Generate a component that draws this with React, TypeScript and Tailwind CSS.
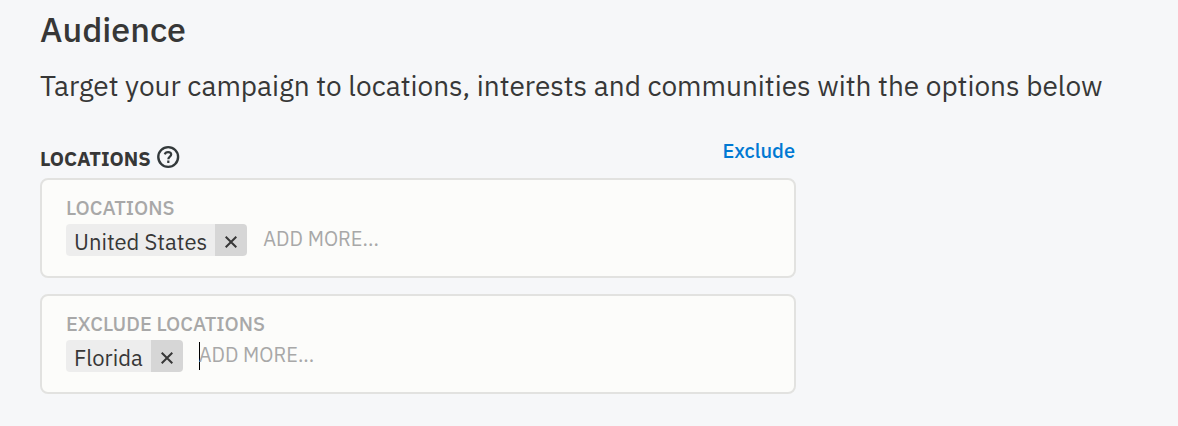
import { useState } from 'react';

type FieldProps = {
  label: string;
  initial: string[];
  focused?: boolean;
};

function LocationField({ label, initial, focused }: FieldProps) {
  const [items, setItems] = useState(initial);

  return (
    <div className="h-[100px] border-2 border-[#e2e2e0] rounded-lg bg-[#fcfcfa] px-6 pt-3.5">
      <div className="h-[30px] text-[20px] leading-7 font-medium text-[#a8a8a8]">{label}</div>
      <div className="flex items-start">
        {items.map((item) => (
          <div key={item} className="flex h-8 mr-4 rounded overflow-hidden text-[#373737]">
            <span className="px-2 bg-[#ededed] text-[22px] leading-9 whitespace-nowrap">{item}</span>
            <button
              onClick={() => setItems(items.filter((i) => i !== item))}
              className="w-8 pt-[3px] bg-[#d6d6d6] flex items-center justify-center"
            >
              <svg width="12" height="12" viewBox="0 0 12 12" stroke="currentColor" strokeWidth="2">
                <path d="M.7.7l10.6 10.6M11.3.7L.7 11.3" />
              </svg>
            </button>
          </div>
        ))}
        <div className="flex items-center h-8 text-[20px] leading-[30px] text-[#a8a8a8]">
          {focused && <span className="w-px h-7 -mr-px bg-black" />}
          <span className="h-8">ADD MORE...</span>
        </div>
      </div>
    </div>
  );
}

export default function App() {
  return (
    <main className="h-[426px] bg-[#f6f7f9] px-10 pt-[11px] text-[#373737] antialiased font-['IBM_Plex_Sans','Roboto',sans-serif]">
      <h1 className="text-[34px] leading-9 font-medium">Audience</h1>
      <p className="mt-[21px] text-[28px] leading-9 whitespace-nowrap">
        Target your campaign to locations, interests and communities with the options below
      </p>
      <section className="mt-8 w-[756px]">
        <header className="flex justify-between h-[42px]">
          <div className="flex items-center gap-[5px] text-[20px] font-bold">
            <span className="pt-1">LOCATIONS</span>
            <svg width="24" height="24" viewBox="0 0 24 24" fill="none" stroke="#33393b" strokeWidth="2.4">
              <circle cx="12.2" cy="12" r="9.9" />
              <path d="M8.8 9.4C9.2 7.9 10.3 7.1 12.1 7.1c1.9 0 3.1 1 3.1 2.4 0 2.1-2.9 2.1-2.9 4.7M12.3 15.5v2.4" strokeWidth="2.2" />
            </svg>
          </div>
          <a href="#" className="text-[20px] font-medium text-[#0079d3] mr-px">Exclude</a>
        </header>
        <div className="flex flex-col gap-4">
          <LocationField label="LOCATIONS" initial={['United States']} />
          <LocationField label="EXCLUDE LOCATIONS" initial={['Florida']} focused />
        </div>
      </section>
    </main>
  );
}
